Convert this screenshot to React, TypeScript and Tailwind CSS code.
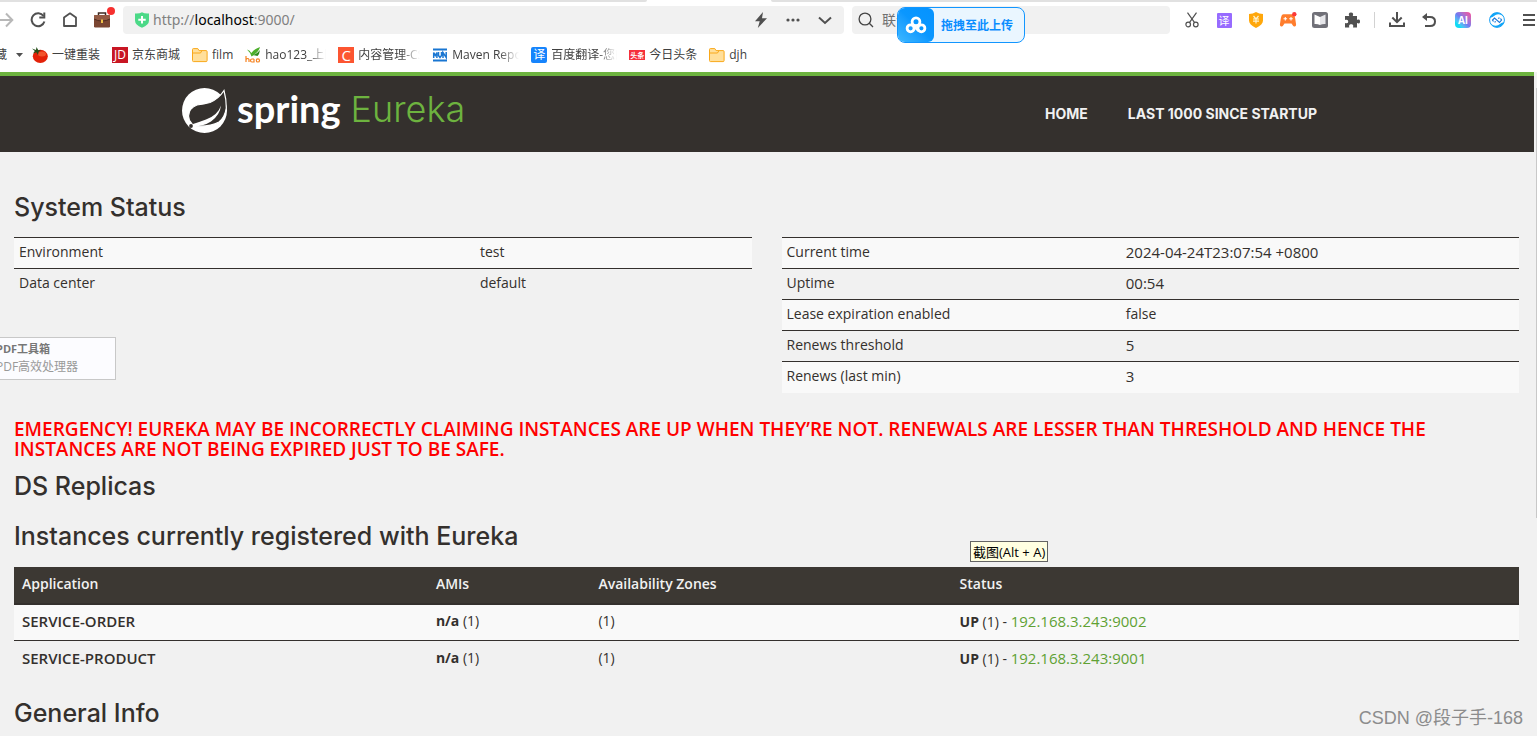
import type { ReactNode } from "react";

function Slot({ label, className = "w-8", children }: { label: string; className?: string; children: ReactNode }) {
  return (
    <button type="button" aria-label={label} className={`flex h-7 shrink-0 items-center justify-center ${className}`}>
      {children}
    </button>
  );
}

function Folder() {
  return (
    <svg width="16" height="16" viewBox="0 0 16 16" fill="#ffdf9b" stroke="#f9a81a">
      <path d="M.5 13.5v-11q0-.9.9-.9h4.4l1.3 2h7q1 0 1 1v9q0 1-1 1H1.5q-1 0-1-1z" />
      <path d="M.5 6h8l1.300-2.200" fill="none" />
    </svg>
  );
}

function Tomato() {
  return (
    <svg width="16" height="16" viewBox="0 0 16 16">
      <ellipse cx="8.300" cy="9.300" rx="7.500" ry="6.600" fill="#e32209" />
      <ellipse cx="10" cy="7" rx="4" ry="2.500" fill="#f8693c" opacity=".7" />
      <path d="M0 1.500 4 3 4.500 0 6.300 3.200 9 3 6.500 5 6 8 4.300 5.300 1 6.500 2.800 4z" fill="#24501b" />
    </svg>
  );
}

function Hao() {
  return (
    <svg width="16" height="16" viewBox="0 0 16 16">
      <path d="M2 2.500q3 .5 4.300 3.500Q9 2 15 0q-1 5-8.500 9.500Q5 5 2 2.500z" fill="#4caf2b" />
      <path d="M8 8q4-1 7-5-.5 4-2.500 6z" fill="#2d8a1f" />
      <path d="M1 9v6m0-2.500q2-2 3 0V15M9 12H7q-1.500 0-1.500 1.500T7 15h2v-3V15M11.300 13.400a1.600 1.600 0 1 0 3.200 0 1.600 1.600 0 1 0-3.200 0" fill="none" stroke="#f58220" strokeWidth="1.200" />
    </svg>
  );
}

function Mvn() {
  return (
    <svg width="16" height="16" viewBox="0 0 16 16" fill="none" stroke="#1976d2">
      <path d="M1 2.500h14M1 13.500h14" strokeWidth="2" />
      <path d="M1.700 11V5.500l1.600 3 1.600-3V11M6.500 5v3.500l1.500 2 1.500-2V5M11 11V5.500l3.200 5V5" strokeWidth="1.500" />
    </svg>
  );
}

function Tile({ className, children }: { className: string; children: ReactNode }) {
  return <span className={`flex h-4 w-4 shrink-0 items-center justify-center leading-4 whitespace-nowrap text-white ${className}`}>{children}</span>;
}

const bookmarks: { label: string; icon: ReactNode; text?: string }[] = [
  { label: "一键重装", icon: <Tomato /> },
  { label: "京东商城", icon: <Tile className="bg-[#c81623] text-[12px]">JD</Tile> },
  { label: "film", icon: <Folder /> },
  { label: "hao123_上网", icon: <Hao />, text: "w-[61px] mask-r-from-70%" },
  { label: "内容管理-CSDN", icon: <Tile className="bg-[#fc5531] text-[15px]">C</Tile>, text: "w-[62px] mask-r-from-70%" },
  { label: "Maven Repository", icon: <Mvn />, text: "w-[67px] mask-r-from-70%" },
  { label: "百度翻译-您的", icon: <Tile className="rounded-xs bg-[#1684fc] text-[12px]">译</Tile>, text: "w-[66px] mask-r-from-70%" },
  {
    label: "今日头条",
    icon: (
      <span className="flex h-[10px] w-4 items-center justify-center bg-[#f5303b] text-[7px] leading-none font-bold whitespace-nowrap text-white">头条</span>
    ),
  },
  { label: "djh", icon: <Folder /> },
];

function AddressBar() {
  return (
    <div className="flex h-7 min-w-0 flex-1 items-center rounded bg-[#f1f1f1] pl-3">
      <svg width="14" height="16" viewBox="0 0 14 16" className="shrink-0">
        <path d="M1.500 1.500Q5 1.500 7 .3q2 1.200 5.500 1.200H14v7q0 4.500-7 7.200Q0 13 0 8.500v-7z" fill="#4bd987" />
        <path d="M7 4v7.400M3.300 7.700h7.400" stroke="#fff" strokeWidth="2" />
      </svg>
      <a href="http://localhost:9000/" className="ml-1 flex-1 font-['Noto_Sans','Noto_Sans_CJK_SC',sans-serif] text-[14px] leading-5 text-[#808080]">
        http://<span className="text-black">localhost</span>:9000/
      </a>
      <Slot label="极速模式">
        <svg width="14" height="16" viewBox="0 0 14 16" fill="#505050">
          <path d="M9 0 1 9.200h4.700L3.800 16 13 6.300H8z" />
        </svg>
      </Slot>
      <Slot label="更多">
        <svg width="14" height="4" viewBox="0 0 14 4" fill="#505050">
          <circle cx="2" cy="2" r="1.600" />
          <circle cx="7" cy="2" r="1.600" />
          <circle cx="12" cy="2" r="1.600" />
        </svg>
      </Slot>
      <Slot label="历史" className="mr-[3px] w-8">
        <svg width="14" height="9" viewBox="0 0 14 9" fill="none" stroke="#505050" strokeWidth="2">
          <path d="m1 1.500 6 5.500 6-5.500" />
        </svg>
      </Slot>
    </div>
  );
}

function SearchBar() {
  return (
    <div className="relative ml-2 flex h-7 w-[318px] shrink-0 items-center rounded bg-[#f1f1f1] pl-[6px]">
      <svg width="16" height="16" viewBox="0 0 16 16" fill="none" stroke="#444" strokeWidth="1.300">
        <circle cx="7" cy="7" r="5.900" />
        <path d="m11.300 11.300 3.700 3.700" />
      </svg>
      <input aria-label="搜索" placeholder="联合国" className="ml-2 w-20 bg-transparent text-[14px] text-[#707070] outline-none placeholder:text-[#707070]" />
      <button
        type="button"
        className="absolute top-px left-[45px] flex h-9 w-32 items-center overflow-hidden rounded-lg border border-[#1296ff] bg-[#eaf6ff] text-[12px] font-bold text-[#0a8dff]"
      >
        <span className="flex h-full w-9 items-center justify-center rounded-r-md bg-linear-to-tr from-[#3cb8ff] via-[#0a97ff] to-[#0593ff]">
          <svg width="22" height="18" viewBox="0 0 22 18" fill="none" stroke="#fff" strokeWidth="2.800">
            <circle cx="11" cy="5.800" r="3.900" />
            <circle cx="5.600" cy="12.300" r="3.500" />
            <circle cx="16.400" cy="12.300" r="3.500" />
            <path d="m8.300 9.500 5.400 5.300" />
          </svg>
        </span>
        <span className="flex-1 pt-[2px] pr-1 text-center">拖拽至此上传</span>
      </button>
    </div>
  );
}

function Extensions() {
  return (
    <div className="ml-[6px] flex shrink-0 items-center">
      <Slot label="截图">
        <svg width="14" height="16" viewBox="0 0 14 16" fill="none" stroke="#505050" strokeWidth="1.200">
          <path d="M2.500.7 9.600 10.600M11.500.7 4.400 10.600" />
          <circle cx="3.200" cy="12.500" r="2.300" />
          <circle cx="10.800" cy="12.500" r="2.300" />
        </svg>
      </Slot>
      <Slot label="翻译">
        <span className="flex h-[15px] w-[15px] items-center justify-center rounded-[1px] bg-[#976bff] text-[11px] leading-none text-white">译</span>
      </Slot>
      <Slot label="购物">
        <svg width="16" height="16" viewBox="0 0 16 16">
          <path d="M8 0q3 2 7 2v6.500q0 4-7 7.500-7-3.500-7-7.500V2q4 0 7-2z" fill="#ffa70b" />
          <path d="m5.500 4 2.500 3 2.500-3M5 7h6M5 9.200h6M8 7v4.500" fill="none" stroke="#fff3d0" strokeWidth="1.200" />
        </svg>
      </Slot>
      <Slot label="游戏">
        <svg width="18" height="16" viewBox="0 0 18 16">
          <path d="M4.500 2.200h9q2 0 2.700 4.300l.9 6q0 2.500-2 2-1.200-.5-2.600-3h-7q-1.400 2.500-2.600 3-2 .5-2-2l.9-6Q2.500 2.200 4.500 2.200z" fill="#ff7d2d" />
          <path d="M6.300 5v3.600M4.500 6.800h3.600M12 5v3.600M10.200 6.800h3.600" stroke="#fff" strokeWidth="1.100" />
          <circle cx="15.300" cy="2.200" r="2.200" fill="#fb3838" />
        </svg>
      </Slot>
      <Slot label="阅读">
        <svg width="16" height="16" viewBox="0 0 16 16">
          <rect width="16" height="16" rx="2.500" fill="#707078" />
          <path d="M2.500 2.500 8 5v8q-2.500-1.300-5.500-1z" fill="#fff" />
          <path d="M13.500 2.500 8 5v8q2.500-1.300 5.500-1z" fill="#e6e6ea" />
        </svg>
      </Slot>
      <Slot label="扩展">
        <svg width="16" height="16" viewBox="0 0 16 16" fill="#505050">
          <path d="M1 4h4.300C4 1 6 .5 7 .5S10 1 8.700 4H13v4c3-1.300 3 .8 3 1.500S16 12.300 13 11v4.500H9c1-3-1-3.200-1.800-3.200S4.500 12.500 5.300 15.500H1V11c3 1 3.200-.7 3.200-1.500S4 7 1 8z" />
        </svg>
      </Slot>
      <span className="flex w-[13px] justify-center">
        <span className="h-4 w-px bg-[#d2d2d2]" />
      </span>
      <Slot label="下载">
        <svg width="16" height="16" viewBox="0 0 16 16" fill="none" stroke="#505050" strokeWidth="2">
          <path d="M8 0v10M3.300 5.500 8 10.200l4.700-4.700M1 10.500V14h14v-3.500" />
        </svg>
      </Slot>
      <Slot label="恢复">
        <svg width="16" height="16" viewBox="0 0 16 16" fill="none" stroke="#505050" strokeWidth="2">
          <path d="M2.500 5H9q5 0 5 4.500T9 14H4" />
          <path d="M6 1 1 5l5 4z" fill="#505050" stroke="none" />
        </svg>
      </Slot>
      <Slot label="AI 助手" className="w-9">
        <span className="flex h-4 w-4 items-center justify-center rounded bg-linear-to-tr from-[#10dcf5] from-20% via-[#7179f0] to-[#ff3d92] text-[10px] leading-none font-bold text-white">
          AI
        </span>
      </Slot>
      <Slot label="浏览器助手">
        <svg width="16" height="16" viewBox="0 0 16 16" fill="none">
          <circle cx="8" cy="8" r="7.400" stroke="#18a0f5" />
          <path d="M.8 6Q2.500.8 8 .8q4.500 0 6.500 3.700Q10.500 1 6.500 3 3.500 5.300.8 6zM15.200 10Q13.500 15.200 8 15.200q-4.500 0-6.500-3.700Q5.500 15 9.500 13q3-2.300 5.700-3z" fill="#10a5f8" />
          <path d="M4.500 9.500 3.500 8l2-2 5 4.500L12.500 8l-1-1.500M6.800 9.500l-1.300.7M9.200 6.500l1.300-.7" stroke="#1c78d8" strokeWidth="1.200" />
        </svg>
      </Slot>
      <Slot label="菜单" className="w-6 pl-2">
        <svg width="12" height="14" viewBox="0 0 12 14" stroke="#505050" strokeWidth="2">
          <path d="M0 2h12M0 7h12M0 12h12" />
        </svg>
      </Slot>
    </div>
  );
}

function BrowserChrome() {
  return (
    <header className="bg-white font-['Open_Sans','Noto_Sans_CJK_SC',sans-serif]">
      <div className="flex h-[2px]">
        <span className="w-[647px] rounded-br-sm bg-[#e1e1e1]" />
        <span className="w-[124px]" />
        <span className="flex-1 rounded-bl-sm bg-[#e1e1e1]" />
      </div>
      <div className="flex h-9 items-center">
        <Slot label="前进" className="w-[22px]">
          <svg width="14" height="16" viewBox="0 0 14 16" fill="none" stroke="#b8b8b8" strokeWidth="2" className="mr-2">
            <path d="M0 8h12M6 1.500 12.300 8 6 14.500" />
          </svg>
        </Slot>
        <Slot label="刷新">
          <svg width="16" height="16" viewBox="0 0 16 16" fill="none" stroke="#505050" strokeWidth="2">
            <path d="M13.500 4A6.500 6.500 0 1 0 14.400 9.500" />
            <path d="M14.300.5V5.500H9.300" />
          </svg>
        </Slot>
        <Slot label="主页">
          <svg width="16" height="16" viewBox="0 0 16 16" fill="none" stroke="#505050" strokeWidth="1.800">
            <path d="M2 14V5.500L8 1.300l6 4.200V14z" strokeLinejoin="round" />
          </svg>
        </Slot>
        <Slot label="工具箱" className="relative mr-[6px] w-[31px]">
          <svg width="18" height="18" viewBox="0 0 18 18">
            <path d="M5.500 5V2h7v3" fill="none" stroke="#3f2a22" strokeWidth="1.500" />
            <rect x="1" y="4" width="16" height="12.500" rx="1.200" fill="#7b4632" />
            <path d="M1 4.800q0-.8.8-.8h14.400q.8 0 .8.800V8q-3.500 2-8 2T1 8z" fill="#935b44" />
            <path d="M1 8q3.500 2 8 2t8-2" fill="none" stroke="#512d20" />
            <rect x="8" y="8.500" width="2" height="3.500" fill="#f0c24a" />
          </svg>
          <span className="absolute top-px right-[2px] h-2 w-2 rounded-full bg-[#f6302f]" />
        </Slot>
        <AddressBar />
        <SearchBar />
        <Extensions />
      </div>
      <nav aria-label="书签" className="flex h-[34px] items-center overflow-hidden text-[12px] text-[#404040]">
        <button type="button" className="flex w-8 shrink-0 items-center">
          <span className="flex w-[7px] justify-end overflow-hidden">藏</span>
          <svg width="7" height="4" viewBox="0 0 7 4" className="ml-[9px]">
            <path d="M0 0h7L3.500 4z" fill="#505050" />
          </svg>
        </button>
        <div className="flex items-center gap-3">
          {bookmarks.map((b) => (
            <a key={b.label} href="#bookmark" className="flex shrink-0 items-center gap-1">
              {b.icon}
              <span className={`overflow-hidden whitespace-nowrap ${b.text ?? ""}`}>{b.label}</span>
            </a>
          ))}
        </div>
      </nav>
    </header>
  );
}

function SiteHeader() {
  return (
    <div className="border-t-4 border-[#6db33f] bg-[#34302d]">
      <div className="mx-auto flex h-[76px] w-full max-w-[1170px] justify-between pr-[35px]">
        <a href="#home" className="flex items-start pt-3">
          <svg width="46" height="46" viewBox="0 0 46 46">
            <circle cx="22.500" cy="22.500" r="22.500" fill="#fff" />
            <path d="M42 2.500Q37 10.500 28 14.500 22 16 15 17 7 20 6.500 28 6.500 32 10 36L13 38Q28 39 37 34 43 29 44.300 20 44.500 12 42 2.500z" fill="#34302d" stroke="#fff" strokeWidth="1.200" />
            <path d="M39 17.500Q36 27 24 31.500 16 34.500 9.500 36.500L12 38.500Q22 38 29 33.500 38 27 39 17.500z" fill="#fff" />
            <circle cx="9" cy="38" r="1.900" fill="#34302d" />
          </svg>
          <span className="ml-[9px] font-['Lato',sans-serif] text-[38px] leading-10 font-bold text-white">spring</span>
          <span className="ml-[10px] font-['Inter',sans-serif] text-[36px] leading-[42px] font-light text-[#6db33f]">Eureka</span>
        </a>
        <nav aria-label="Main" className="flex items-center gap-10 font-['Inter',sans-serif] text-[14px] font-bold text-[#f1f1f1]">
          <a href="#home">HOME</a>
          <a href="#lastn">LAST 1000 SINCE STARTUP</a>
        </nav>
      </div>
    </div>
  );
}

function InfoTable({ label, rows, first }: { label: string; rows: [string, string][]; first: string }) {
  return (
    <table aria-label={label} className="w-full table-fixed border-collapse text-left">
      <tbody>
        {rows.map(([name, value]) => (
          <tr key={name} className="h-[31px] border-t border-[#34302d] odd:bg-[#f9f9f9]">
            <th scope="row" className={`px-[5px] pb-[2px] font-normal ${first}`}>{name}</th>
            <td className={`px-[5px] pb-[2px] ${/\d/.test(value) ? "text-[15px]" : ""}`}>{value}</td>
          </tr>
        ))}
      </tbody>
    </table>
  );
}

const apps = [
  { name: "SERVICE-ORDER", url: "192.168.3.243:9002" },
  { name: "SERVICE-PRODUCT", url: "192.168.3.243:9001" },
];

function Heading({ className, children }: { className: string; children: ReactNode }) {
  return <h1 className={`font-['Inter',sans-serif] text-[25px] leading-[30px] font-medium ${className}`}>{children}</h1>;
}

export default function App() {
  return (
    <div className="relative flex min-h-screen flex-col overflow-hidden bg-[#f1f1f1] font-['Open_Sans','Noto_Sans_CJK_SC',sans-serif] text-[14px] leading-5 text-[#34302d]">
      <BrowserChrome />
      <div className="flex flex-1">
        <div className="min-w-0 flex-1">
          <SiteHeader />
          <main className="pr-[15px] pl-[14px]">
            <Heading className="mt-10">System Status</Heading>
            <div className="mt-[15px] grid grid-cols-2 items-start gap-[30px]">
              <InfoTable label="Environment" first="w-[62.5%]" rows={[["Environment", "test"], ["Data center", "default"]]} />
              <InfoTable
                label="Runtime"
                first="w-[46%]"
                rows={[
                  ["Current time", "2024-04-24T23:07:54 +0800"],
                  ["Uptime", "00:54"],
                  ["Lease expiration enabled", "false"],
                  ["Renews threshold", "5"],
                  ["Renews (last min)", "3"],
                ]}
              />
            </div>
            <h4 className="mt-[26px] text-[19px] leading-5 font-semibold text-[#ff0000]">
              EMERGENCY! EUREKA MAY BE INCORRECTLY CLAIMING INSTANCES ARE UP WHEN THEY’RE NOT. RENEWALS ARE LESSER THAN THRESHOLD AND HENCE THE
              INSTANCES ARE NOT BEING EXPIRED JUST TO BE SAFE.
            </h4>
            <Heading className="mt-3">DS Replicas</Heading>
            <Heading className="mt-5">Instances currently registered with Eureka</Heading>
            <table className="mt-4 w-full table-fixed border-collapse text-left">
              <thead>
                <tr className="h-[37px] border-b-2 border-[#34302d] bg-[#3c3833] text-[#f1f1f1]">
                  <th className="w-[27.5%] px-2 pb-[2px] font-semibold">Application</th>
                  <th className="w-[10.8%] px-2 pb-[2px] font-semibold">AMIs</th>
                  <th className="w-[24%] px-2 pb-[2px] font-semibold">Availability Zones</th>
                  <th className="px-2 pb-[2px] font-semibold">Status</th>
                </tr>
              </thead>
              <tbody>
                {apps.map((a) => (
                  <tr key={a.name} className="h-[37px] border-t border-[#34302d] odd:bg-[#f9f9f9]">
                    <td className="px-2 pb-[2px] text-[15px] font-semibold">{a.name}</td>
                    <td className="px-2 pb-[2px]"><b>n/a</b> (1)</td>
                    <td className="px-2 pb-[2px]">(1)</td>
                    <td className="px-2 pb-[2px]">
                      <b>UP</b> (1) - <a href="#instance" className="text-[15px] text-[#5fa134]">{a.url}</a>
                    </td>
                  </tr>
                ))}
              </tbody>
            </table>
            <Heading className="mt-5">General Info</Heading>
          </main>
        </div>
        <div className="flex w-[3px] justify-end pt-4">
          <span className="h-[430px] w-px bg-[#c8c8c8]" />
        </div>
      </div>

      <aside className="absolute top-[337px] left-0 h-[43px] w-[116px] overflow-hidden border border-l-0 border-[#c8c8c8] bg-[#fcfcff] pt-[2px] text-[12px] leading-[18px] text-[#999]">
        <div className="-ml-1 whitespace-nowrap">
          <p className="text-[11px] font-bold text-[#777]">PDF工具箱</p>
          <p>PDF高效处理器</p>
        </div>
      </aside>
      <div role="tooltip" className="absolute top-[541px] left-[970px] flex h-[21px] items-center border border-[#646464] bg-[#ffffe1] px-[2px] text-[13px] leading-4 whitespace-nowrap text-black">
        截图(Alt + A)
      </div>
      <p className="absolute right-[14px] bottom-[6px] font-['Liberation_Sans','Noto_Sans_CJK_SC',sans-serif] text-[18px] leading-6 text-[#8c8c8c]">CSDN @段子手-168</p>
    </div>
  );
}
